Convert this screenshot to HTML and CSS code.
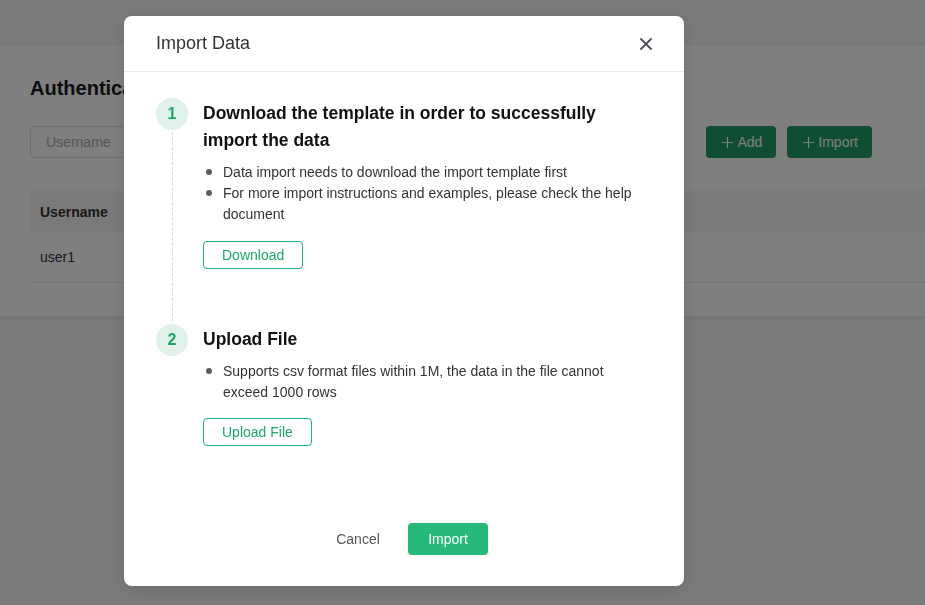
FILE: index.html
```html
<!DOCTYPE html>
<html lang="en">
<head>
<meta charset="utf-8">
<title>Import Data</title>
<link rel="stylesheet" href="styles.css">
</head>
<body>
<div class="page">
  <div class="topbar"></div>
  <section class="card">
    <h1 class="page-title">Authentication Users</h1>
    <div class="toolbar">
      <div class="search">Username</div>
      <div class="actions">
        <button class="btn-solid"><svg class="plus" width="13" height="13" viewBox="0 0 13 13"><path d="M6.5 1V12M1 6.5H12" stroke="#fff" stroke-width="1.2"/></svg>Add</button>
        <button class="btn-solid"><svg class="plus" width="13" height="13" viewBox="0 0 13 13"><path d="M6.5 1V12M1 6.5H12" stroke="#fff" stroke-width="1.2"/></svg>Import</button>
      </div>
    </div>
    <div class="table">
      <div class="thead"><span>Username</span></div>
      <div class="trow"><span>user1</span></div>
    </div>
  </section>
</div>

<div class="overlay">
  <div class="modal">
    <header class="modal-header">
      <span class="modal-title">Import Data</span>
      <svg class="close" width="12" height="12" viewBox="0 0 12 12"><path d="M1 1L11 11M11 1L1 11" stroke="#4a4e57" stroke-width="1.8" stroke-linecap="round"/></svg>
    </header>
    <div class="modal-body">
      <div class="step first">
        <div class="rail">
          <div class="num">1</div>
          <div class="dash"></div>
        </div>
        <div class="step-content">
          <h2 class="step-title">Download the template in order to successfully import the data</h2>
          <ul class="bullets">
            <li>Data import needs to download the import template first</li>
            <li>For more import instructions and examples, please check the help document</li>
          </ul>
          <button class="btn-outline">Download</button>
        </div>
      </div>
      <div class="step">
        <div class="rail">
          <div class="num">2</div>
        </div>
        <div class="step-content">
          <h2 class="step-title">Upload File</h2>
          <ul class="bullets">
            <li>Supports csv format files within 1M, the data in the file cannot exceed 1000 rows</li>
          </ul>
          <button class="btn-outline">Upload File</button>
        </div>
      </div>
    </div>
    <footer class="modal-footer">
      <button class="btn-text">Cancel</button>
      <button class="btn-primary">Import</button>
    </footer>
  </div>
</div>
</body>
</html>
```

FILE: styles.css
```css
* { box-sizing: border-box; }
html, body { margin: 0; padding: 0; }
body {
  width: 925px;
  height: 605px;
  overflow: hidden;
  font-family: "Liberation Sans", Arial, sans-serif;
  font-size: 14px;
  color: #333;
  background: #f3f4f7;
}
button { font-family: inherit; cursor: pointer; }

.page { height: 605px; }
.topbar { height: 45px; background: #f3f4f7; }
.card {
  background: #fff;
  height: 271px;
  padding: 26px 0 0 30px;
  box-shadow: 0 2px 6px rgba(0,0,0,0.08);
}
.page-title {
  margin: 0;
  font-size: 20px;
  line-height: 34px;
  font-weight: 700;
  color: #1a1a1a;
  white-space: nowrap;
}
.toolbar {
  display: flex;
  justify-content: space-between;
  align-items: center;
  margin-top: 21px;
  padding-right: 53px;
}
.search {
  width: 220px;
  height: 32px;
  border: 1px solid #dcdfe6;
  border-radius: 4px;
  padding-left: 15px;
  line-height: 30px;
  color: #a8abb2;
}
.actions { display: flex; gap: 11px; }
.btn-solid {
  height: 32px;
  border: none;
  border-radius: 4px;
  background: #1f9d64;
  color: #fff;
  font-size: 14px;
  padding: 0 14px 0 15px;
  display: flex;
  align-items: center;
  gap: 3px;
}
.btn-solid .plus { display: block; }
.table { margin-top: 33px; }
.thead {
  height: 41px;
  background: #f5f5f6;
  border-radius: 4px 0 0 4px;
  padding-left: 10px;
  display: flex;
  align-items: center;
  font-weight: 700;
  color: #333;
}
.trow {
  height: 51px;
  padding-left: 10px;
  display: flex;
  align-items: center;
  border-bottom: 1px solid #e4e6ea;
  color: #333;
}

.overlay {
  position: fixed;
  inset: 0;
  background: rgba(0,0,0,0.5);
  display: flex;
  align-items: flex-start;
  padding: 16px 0 0 124px;
}
.modal {
  width: 560px;
  height: 570px;
  background: #fff;
  border-radius: 8px;
  display: flex;
  flex-direction: column;
  box-shadow: 0 4px 16px rgba(0,0,0,0.12);
}
.modal-header {
  height: 56px;
  flex: none;
  display: flex;
  align-items: center;
  justify-content: space-between;
  padding: 0 32px;
  border-bottom: 1px solid #ebebf2;
}
.modal-title { font-size: 18px; color: #333; }
.close { display: block; margin-top: 1px; }

.modal-body {
  flex: 1;
  padding: 26px 32px 0;
}
.step { display: flex; gap: 15px; }
.step.first { padding-bottom: 55px; }
.rail {
  width: 32px;
  flex: none;
  display: flex;
  flex-direction: column;
  align-items: center;
}
.num {
  width: 32px;
  height: 32px;
  border-radius: 50%;
  background: #dff1e9;
  color: #1aa86a;
  font-weight: 700;
  font-size: 16px;
  display: flex;
  align-items: center;
  justify-content: center;
}
.dash {
  flex: 1;
  width: 0;
  margin: 2px 0 -52px;
  border-left: 1px dashed #d5d8dd;
}
.step-content { flex: 1; min-width: 0; }
.step-title {
  margin: 0;
  padding-top: 2px;
  max-width: 430px;
  font-size: 17.5px;
  line-height: 27px;
  font-weight: 700;
  color: #111;
}
.bullets {
  list-style: none;
  margin: 8px 0 0;
  padding: 0 0 0 20px;
}
.bullets li {
  position: relative;
  line-height: 21px;
  color: #333;
}
.bullets li::before {
  content: "";
  position: absolute;
  left: -17px;
  top: 7px;
  width: 6px;
  height: 6px;
  border-radius: 50%;
  background: #5c5e66;
}
.btn-outline {
  margin-top: 15px;
  height: 28px;
  padding: 0 18px;
  background: #fff;
  border: 1px solid #1fb076;
  border-radius: 4px;
  color: #1aa86a;
  font-size: 14px;
}
.step.first .btn-outline { margin-top: 16px; }

.modal-footer {
  flex: none;
  display: flex;
  justify-content: center;
  gap: 12px;
  padding: 0 32px 31px;
}
.btn-text {
  width: 76px;
  height: 32px;
  border: none;
  background: none;
  color: #555;
  font-size: 14px;
}
.btn-primary {
  width: 80px;
  height: 32px;
  border: none;
  border-radius: 4px;
  background: #25b97a;
  color: #fff;
  font-size: 14px;
}
```
